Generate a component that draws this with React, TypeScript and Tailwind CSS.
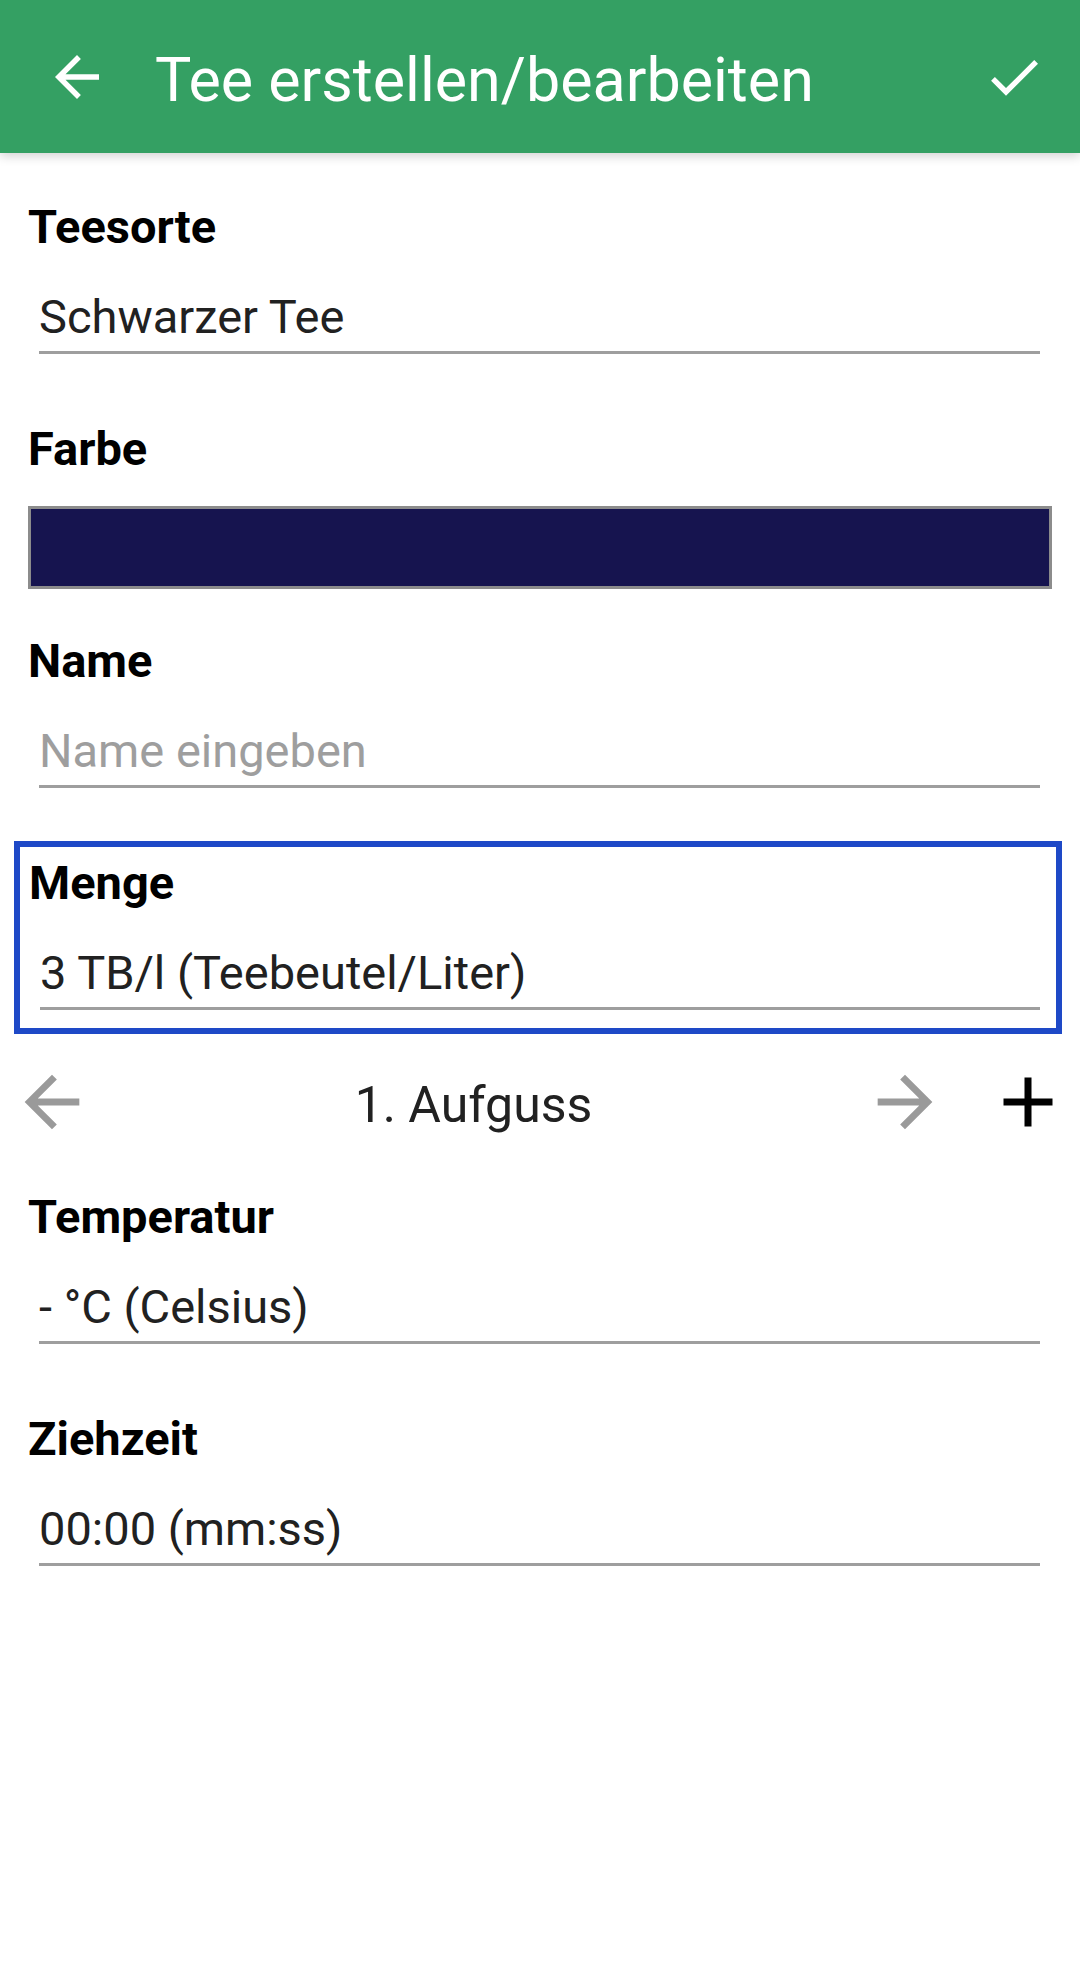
import type { ReactNode } from 'react';

const font = { fontFamily: 'Roboto, "Noto Sans", Arial, sans-serif' };

function ArrowBack({ className }: { className?: string }) {
  return (
    <svg viewBox="0 0 24 24" className={className} fill="currentColor" aria-hidden>
      <path d="M20 11H7.83l5.59-5.59L12 4l-8 8 8 8 1.41-1.41L7.83 13H20v-2z" />
    </svg>
  );
}

function ArrowForward({ className }: { className?: string }) {
  return (
    <svg viewBox="0 0 24 24" className={className} fill="currentColor" aria-hidden>
      <path d="M12 4l-1.41 1.41L16.17 11H4v2h12.17l-5.58 5.59L12 20l8-8z" />
    </svg>
  );
}

function Check({ className }: { className?: string }) {
  return (
    <svg viewBox="0 0 24 24" className={className} fill="currentColor" aria-hidden>
      <path d="M9 16.17L4.83 12l-1.42 1.41L9 19 21 7l-1.41-1.41z" />
    </svg>
  );
}

function Plus({ className }: { className?: string }) {
  return (
    <svg viewBox="0 0 24 24" className={className} fill="currentColor" aria-hidden>
      <path d="M19 13h-6v6h-2v-6H5v-2h6V5h2v6h6v2z" />
    </svg>
  );
}

function Label({ children }: { children: ReactNode }) {
  return <div className="h-[56px] text-[47px] font-bold leading-[56px] text-black">{children}</div>;
}

function Field({ label, value, placeholder }: { label: string; value?: string; placeholder?: string }) {
  return (
    <div>
      <Label>{label}</Label>
      <div className="ml-[11px] mr-[12px] mt-[34px] border-b-[3px] border-[#9e9e9e] pb-[6px]">
        <div
          className={`h-[56px] whitespace-nowrap text-[47px] leading-[56px] ${
            value ? 'text-[#212121]' : 'text-[#9e9e9e]'
          }`}
        >
          {value ?? placeholder}
        </div>
      </div>
    </div>
  );
}

export default function App() {
  return (
    <div className="min-h-[1962px] w-full bg-white" style={font}>
      <header className="relative z-10 flex h-[153px] items-center bg-[#34a063] pl-[44px] pr-[34px] text-white shadow-[0_3px_10px_rgba(0,0,0,0.18)]">
        <ArrowBack className="h-[66px] w-[66px] shrink-0" />
        <h1 className="ml-[45px] mt-[6px] flex-1 whitespace-nowrap text-[61px] font-normal leading-[70px]">
          Tee erstellen/bearbeiten
        </h1>
        <Check className="h-[64px] w-[64px] shrink-0" />
      </header>

      <main className="px-[28px] pt-[46px]">
        <Field label="Teesorte" value="Schwarzer Tee" />

        <div className="mt-[67px]">
          <Label>Farbe</Label>
          <div className="mt-[29px] h-[83px] border-[3px] border-[#8c8c8c] bg-[#16144f]" />
        </div>

        <div className="mt-[44px]">
          <Field label="Name" placeholder="Name eingeben" />
        </div>

        <div className="ml-[-14px] mr-[-10px] mt-[53px] border-[6px] border-[#1e49c7] pb-[18px] pl-[9px] pr-[4px] pt-[8px]">
          <Field label="Menge" value="3 TB/l (Teebeutel/Liter)" />
        </div>

        <div className="mx-[-28px] mt-[26px] flex h-[84px] items-center pl-[11px] pr-[10px]">
          <ArrowBack className="h-[82px] w-[82px] shrink-0 text-[#9a9a9a]" />
          <div className="flex-1 pr-[10px] pt-[5px] text-center text-[50px] leading-[58px] text-[#212121]">1. Aufguss</div>
          <ArrowForward className="h-[82px] w-[82px] shrink-0 text-[#9a9a9a]" />
          <Plus className="ml-[40px] h-[84px] w-[84px] shrink-0 text-black" />
        </div>

        <div className="mt-[45px]">
          <Field label="Temperatur" value="- °C (Celsius)" />
        </div>

        <div className="mt-[67px]">
          <Field label="Ziehzeit" value="00:00 (mm:ss)" />
        </div>
      </main>
    </div>
  );
}
